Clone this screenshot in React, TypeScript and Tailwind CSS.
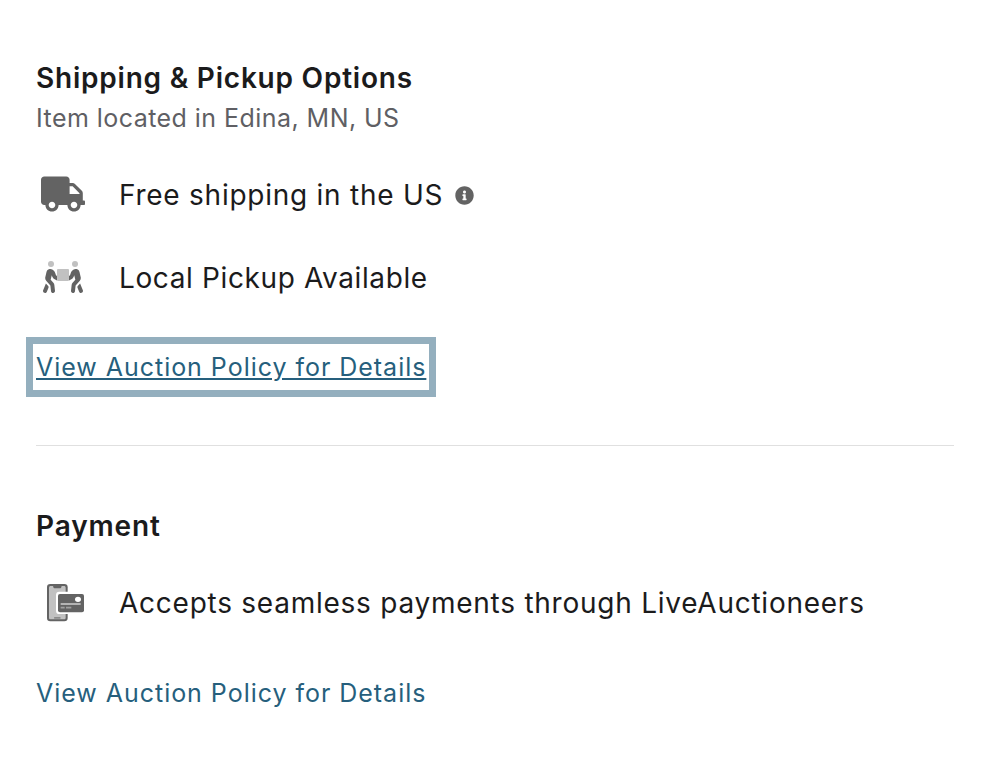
import type { ReactNode } from "react";
import { FaInfoCircle, FaTruck } from "react-icons/fa";

function Carrier({ className }: { className?: string }) {
  return (
    <svg viewBox="0 0 640 512" className={className} aria-hidden="true">
      <g id="person">
        <circle cx="128" cy="48" r="48" fill="#c1c1c1" />
        <path
          fill="#636363"
          d="M224 240l-16.1-10.2-11.3-33.9c-8.3-25-25.4-46-48.1-59.4-17.2-10-37.6-11.3-56.1-3.3-18.9 8.1-32.9 24.9-37.5 44.9l-18.4 80.2c-4.6 20 .7 41.2 14.4 56.7l67.2 75.9 10.1 92.6C130 499.8 143.8 512 160 512c1.2 0 2.3-.1 3.5-.2 17.6-1.9 30.2-17.7 28.3-35.3l-10.1-92.8c-1.5-13-6.9-25.1-15.6-35l-43.3-49 17.6-70.3 6.8 20.4c4.1 12.5 11.9 23.4 24.5 32.6L224 312zM46.3 358.1l-44 110c-6.6 16.4 1.4 35 17.8 41.6 16.8 6.6 35.1-1.7 41.6-17.8l27.7-69.2-2-18.2z"
        />
      </g>
      <use href="#person" transform="matrix(-1 0 0 1 640 0)" />
      <rect x="224" y="128" width="192" height="192" rx="16" fill="#c1c1c1" />
    </svg>
  );
}

function PhonePayment({ className }: { className?: string }) {
  return (
    <svg viewBox="0 0 120 120" className={className} aria-hidden="true">
      <rect x="3" y="3" width="62" height="112" rx="10" fill="#636363" />
      <path
        fill="#c1c1c1"
        d="M14 9h6c1 0 2 1 2 3s2 4 5 4h14c3 0 5-2 5-4s1-3 2-3h6c3 0 5 2 5 5v90c0 3-2 5-5 5H14c-3 0-5-2-5-5V14c0-3 2-5 5-5z"
      />
      <rect x="24" y="102" width="20" height="5" rx="2" fill="#8a8a8a" />
      <rect x="30" y="26" width="90" height="67" rx="10" fill="#fff" />
      <rect x="36" y="33" width="78" height="55" rx="6" fill="#636363" />
      <ellipse cx="96" cy="49" rx="9" ry="8" fill="#fff" />
      <rect x="44" y="60" width="60" height="6" fill="#b4b4b4" />
      <path d="M44 74h12M60 74h16" stroke="#a0a0a0" strokeWidth="5" />
    </svg>
  );
}

interface OptionRowProps {
  icon: ReactNode;
  children: ReactNode;
}

function OptionRow({ icon, children }: OptionRowProps) {
  return (
    <div className="flex h-10 items-center gap-[29px]">
      <div className="flex w-[54px] shrink-0 justify-center">{icon}</div>
      <p className="flex items-center text-[28px] leading-10 tracking-[0.75px] whitespace-nowrap text-[#1b1b1c]">
        {children}
      </p>
    </div>
  );
}

export default function App() {
  return (
    <main className="h-[760px] w-[982px] bg-white pt-[58px] pr-7 pl-9 font-['Inter',sans-serif]">
      <section className="h-[388px] border-b border-[#e0e0e0]">
        <h2 className="text-[28px] leading-10 font-semibold tracking-[0.78px] text-[#1b1b1c]">
          Shipping &amp; Pickup Options
        </h2>
        <p className="text-[25px] leading-10 tracking-[0.45px] text-[#5f5f64]">
          Item located in Edina, MN, US
        </p>
        <div className="mt-[37px] flex flex-col gap-[43px]">
          <OptionRow icon={<FaTruck className="mb-[3px] h-9 w-11 text-[#636363]" />}>
            Free shipping in the US
            <FaInfoCircle className="ml-3 size-[19px] text-[#636363]" />
          </OptionRow>
          <OptionRow icon={<Carrier className="mb-0.5 h-8 w-10" />}>
            <span className="tracking-[0.62px]">Local Pickup Available</span>
          </OptionRow>
        </div>
        <a
          href="#shipping-policy"
          className="mt-[39px] -ml-2.5 flex h-[60px] w-[410px] items-center border-[7px] border-[#94afbe] pt-0.5 pl-[3px] text-[25px] tracking-[0.97px] whitespace-nowrap text-[#265f7d] underline"
        >
          View Auction Policy for Details
        </a>
      </section>

      <section className="pt-[60px]">
        <h2 className="text-[28px] leading-10 font-semibold tracking-[0.85px] text-[#1b1b1c]">
          Payment
        </h2>
        <div className="mt-[37px]">
          <OptionRow icon={<PhonePayment className="ml-1.5 size-10" />}>
            Accepts seamless payments through LiveAuctioneers
          </OptionRow>
        </div>
        <a
          href="#payment-policy"
          className="mt-[50px] block text-[25px] leading-10 tracking-[0.97px] whitespace-nowrap text-[#265f7d]"
        >
          View Auction Policy for Details
        </a>
      </section>
    </main>
  );
}
